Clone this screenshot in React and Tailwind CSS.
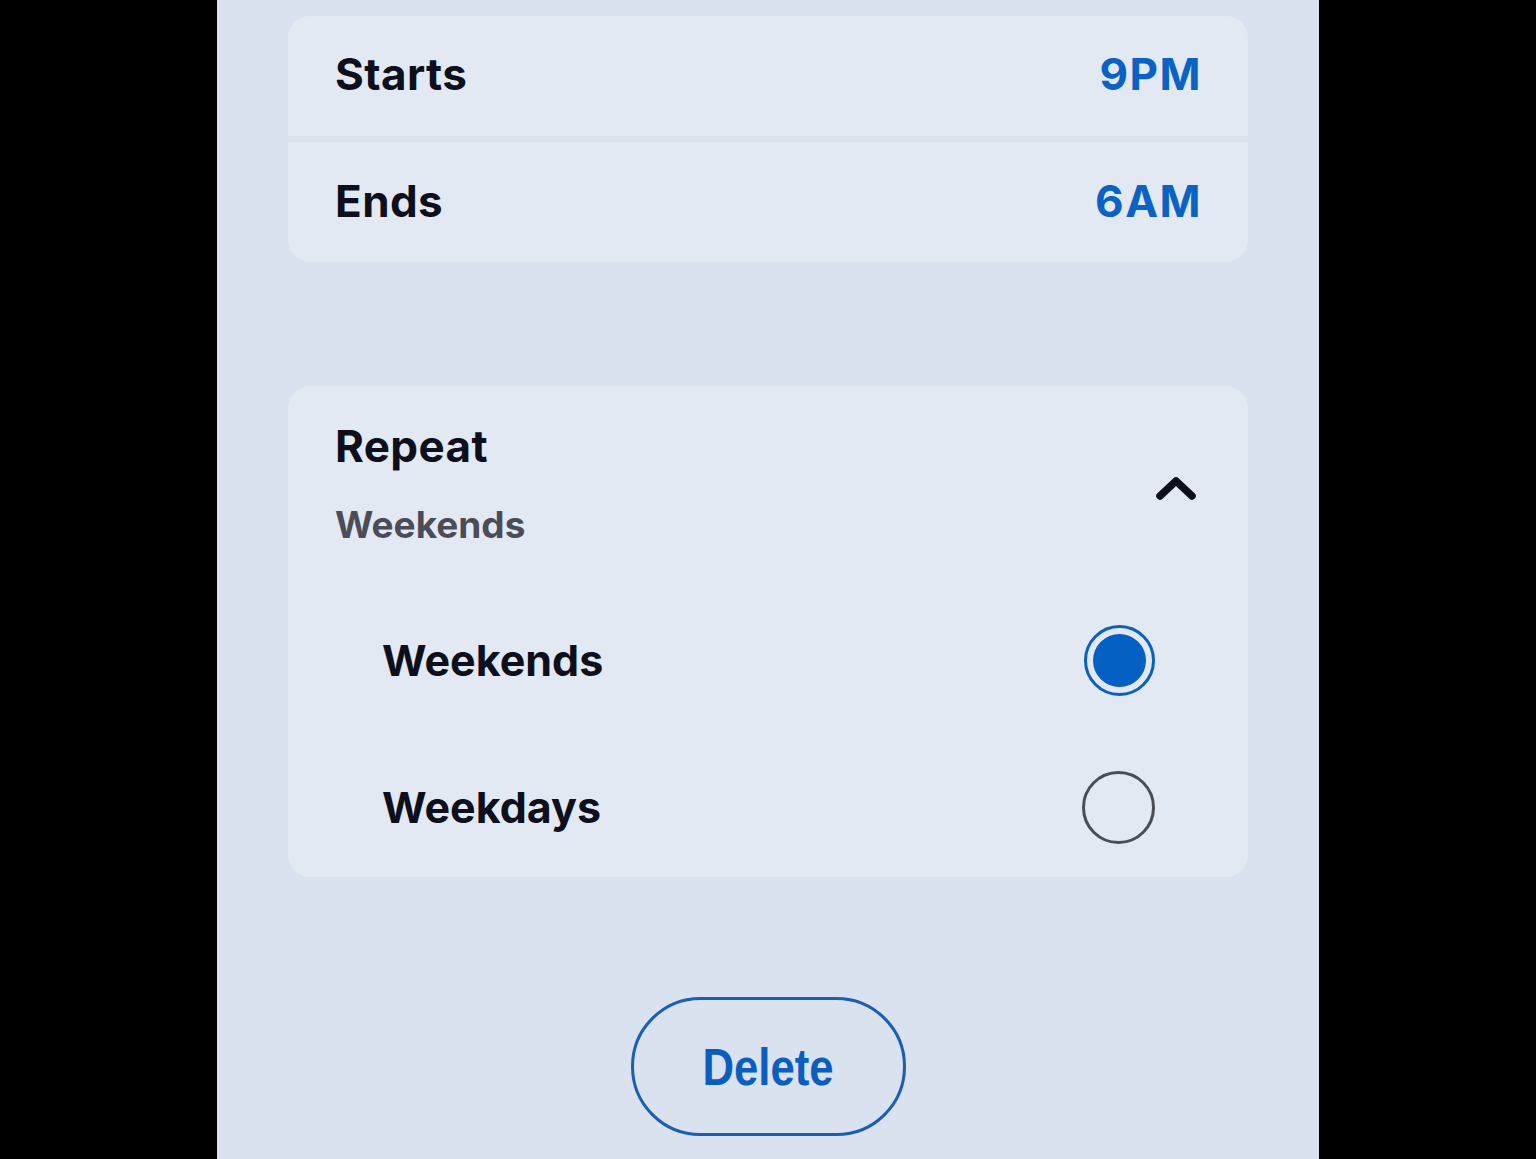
export default function App() {
  const font = { fontFamily: "Inter, 'Noto Sans', sans-serif" };
  return (
    <div className="w-full min-h-[1159px] bg-black flex justify-center" style={font}>
      <div className="w-[1102px] min-h-[1159px] bg-[#d9e2ee] flex flex-col px-[71px] pt-[16px]">
        {/* Time card */}
        <div className="rounded-[22px] overflow-hidden flex flex-col bg-[#dae2ee]">
          <div className="h-[120px] bg-[#e3e9f2] flex items-center justify-between px-[47px]">
            <span className="text-[44px] leading-[52px] font-bold text-[#0d0f1c] tracking-[0.4px] -mt-[4px]">Starts</span>
            <span className="text-[44px] leading-[52px] font-bold text-[#0a62c4] tracking-[1.5px] -mt-[4px] -mr-[1px]">9PM</span>
          </div>
          <div className="h-[6px]" />
          <div className="h-[120px] bg-[#e3e9f2] flex items-center justify-between px-[47px]">
            <span className="text-[44px] leading-[52px] font-bold text-[#0d0f1c] tracking-[0.4px] -mt-[2px]">Ends</span>
            <span className="text-[44px] leading-[52px] font-bold text-[#0a62c4] tracking-[1.5px] -mt-[2px] -mr-[1px]">6AM</span>
          </div>
        </div>

        {/* Repeat card */}
        <div className="mt-[124px] rounded-[22px] bg-[#e3e9f2] h-[491px] flex flex-col px-[47px] pt-[34px]">
          <div className="flex items-center justify-between">
            <div className="flex flex-col">
              <span className="text-[44px] leading-[52px] font-bold text-[#0d0f1c] tracking-[0.4px]">Repeat</span>
              <span className="mt-[31px] text-[37px] leading-[44px] font-bold text-[#4a4d58]">Weekends</span>
            </div>
            <svg width="40" height="26" viewBox="0 0 40 26" className="mt-[8px] mr-[5px]">
              <path d="M4 21 L20 6 L36 21" fill="none" stroke="#0d0f1c" strokeWidth="7.5" strokeLinecap="round" strokeLinejoin="round" />
            </svg>
          </div>
          <div className="flex flex-col pl-[48px] pr-[46px] mt-[63px]">
            <div className="h-[100px] flex items-center justify-between">
              <span className="text-[43px] font-bold text-[#0d0f1c] -ml-[1px]">Weekends</span>
              <span className="w-[71px] h-[71px] rounded-full border-[3px] border-[#0a5fc0] flex items-center justify-center">
                <span className="w-[53px] h-[53px] rounded-full bg-[#0560c4]" />
              </span>
            </div>
            <div className="h-[100px] mt-[47px] flex items-center justify-between">
              <span className="text-[43px] font-bold text-[#0d0f1c] -ml-[1px]">Weekdays</span>
              <span className="w-[73px] h-[73px] rounded-full border-[3px] border-[#4b4d55]" />
            </div>
          </div>
        </div>

        {/* Delete */}
        <div className="mt-[120px] flex justify-center">
          <button
            className="w-[275px] h-[139px] rounded-full border-[3px] border-[#1a5eb6] flex items-center justify-center text-[#0a5ec0]"
            style={{ fontFamily: "'Liberation Sans', Arial, sans-serif" }}
          >
            <span className="inline-block text-[52px] font-bold scale-x-[0.84]">Delete</span>
          </button>
        </div>
      </div>
    </div>
  );
}
